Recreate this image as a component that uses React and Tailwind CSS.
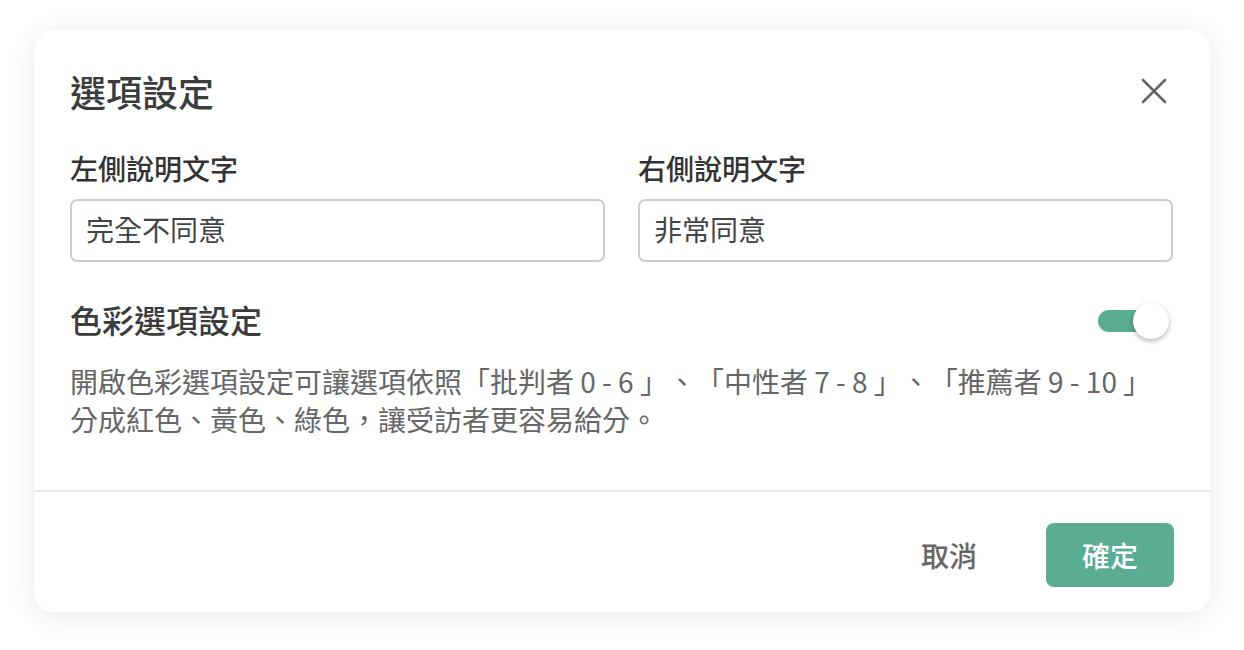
export default function App() {
  const font = { fontFamily: '"Noto Sans CJK TC", "Noto Sans", sans-serif' };
  return (
    <div className="w-[1244px] h-[650px] bg-white pt-[30px] pl-[34px]" style={font}>
      <div className="w-[1176px] h-[582px] bg-white rounded-[20px] shadow-[0_4px_28px_rgba(0,0,0,0.09)] flex flex-col">
        <div className="pt-[36px] pl-[36px] pr-[37px] pb-[52px] flex flex-col">
          <div className="flex items-center justify-between h-[50px]">
            <h1 className="text-[36px] leading-[50px] font-medium text-[#3c3c3c]">選項設定</h1>
            <svg width="26" height="26" viewBox="0 0 26 26" className="mr-[6px]" fill="none" stroke="#666" strokeWidth="2.6" strokeLinecap="round">
              <path d="M2 2L24 24M24 2L2 24" />
            </svg>
          </div>
          <div className="mt-[32px] grid grid-cols-2 gap-x-[33px]">
            <div className="flex flex-col">
              <label className="text-[28px] leading-[40px] font-medium text-[#333]">左側說明文字</label>
              <div className="mt-[11px] h-[63px] border-2 border-[#cccccc] rounded-[7px] flex items-center px-[14px] pb-[3px] text-[28px] text-[#444]">完全不同意</div>
            </div>
            <div className="flex flex-col">
              <label className="text-[28px] leading-[40px] font-medium text-[#333]">右側說明文字</label>
              <div className="mt-[11px] h-[63px] border-2 border-[#cccccc] rounded-[7px] flex items-center px-[14px] pb-[3px] text-[28px] text-[#444]">非常同意</div>
            </div>
          </div>
          <div className="mt-[35px] flex items-center justify-between h-[44px]">
            <h2 className="text-[32px] leading-[44px] font-medium text-[#3c3c3c]">色彩選項設定</h2>
            <div className="relative w-[64px] h-[22px] mr-[11px] mt-[4px] rounded-full bg-[#5aac93]">
              <div className="absolute right-[-7px] top-1/2 -translate-y-1/2 w-[36px] h-[36px] rounded-full bg-white shadow-[0_2px_5px_rgba(0,0,0,0.3)]"></div>
            </div>
          </div>
          <p className="mt-[21px] text-[28px] leading-[38px] text-[#666] whitespace-nowrap [text-spacing-trim:space-all]">
            開啟色彩選項設定可讓選項依照「批判者&nbsp;0&nbsp;-&nbsp;6&nbsp;」、「中性者&nbsp;7&nbsp;-&nbsp;8&nbsp;」、「推薦者&nbsp;9&nbsp;-&nbsp;10&nbsp;」<br />分成紅色、黃色、綠色，讓受訪者更容易給分。
          </p>
        </div>
        <div className="border-t-2 border-[#e8e8e8]"></div>
        <div className="flex-1 flex items-start justify-end pt-[31px] pr-[36px] gap-[69px]">
          <button className="h-[64px] text-[28px] font-medium text-[#666]">取消</button>
          <button className="w-[128px] h-[64px] rounded-[8px] bg-[#5aac93] text-white text-[28px] font-medium">確定</button>
        </div>
      </div>
    </div>
  );
}
